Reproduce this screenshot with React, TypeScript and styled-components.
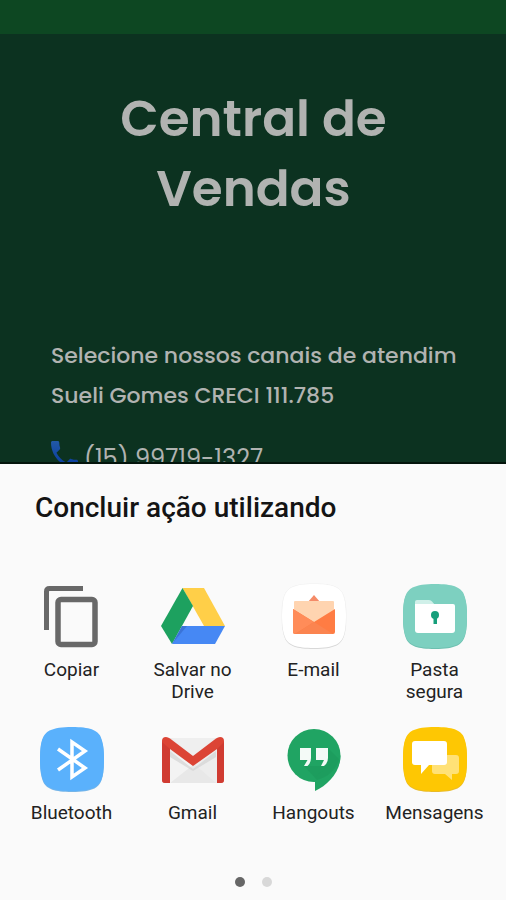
import React from "react";
import styled, { createGlobalStyle } from "styled-components";

const GlobalStyle = createGlobalStyle`
  *, *::before, *::after { box-sizing: border-box; }
  body { margin: 0; background: #0c3220; }
`;

const Screen = styled.div`
  display: flex;
  flex-direction: column;
  height: 100vh;
  overflow: hidden;
`;

const StatusBar = styled.div`
  flex: none;
  height: 34px;
  background: #0d4722;
`;

const Page = styled.main`
  flex: 1;
  min-height: 0;
  overflow: hidden;
  padding: 50px 50px 0 51px;
  background: #0c3220;
  color: #b1b3b1;
  font-family: Poppins, Inter, sans-serif;
`;

const Heading = styled.h1`
  max-width: 300px;
  margin: 0 auto 112px;
  font-size: 50px;
  font-weight: 600;
  line-height: 70px;
  text-align: center;
`;

const Line = styled.p`
  margin: 0;
  overflow: hidden;
  font-size: 22px;
  font-weight: 500;
  line-height: 40px;
  white-space: nowrap;
`;

const PhoneLink = styled.a`
  display: flex;
  align-items: flex-start;
  gap: 6px;
  margin-top: 25px;
  color: inherit;
  font-size: 24px;
  font-weight: 400;
  line-height: 36px;
  text-decoration: none;

  svg { flex: none; }
`;

const Sheet = styled.section`
  flex: none;
  padding: 24px 11px 12px;
  border-top: 2px solid #04150c;
  background: #fafafa;
  color: #141414;
  font-family: Roboto, sans-serif;
`;

const SheetTitle = styled.h2`
  margin: 0 24px 56px;
  font-size: 28px;
  font-weight: 500;
  line-height: 40px;
`;

const AppGrid = styled.div`
  display: grid;
  grid-template-columns: repeat(4, minmax(0, 1fr));
  row-gap: 24px;
`;

const AppButton = styled.button`
  display: flex;
  flex-direction: column;
  align-items: center;
  gap: 11px;
  padding: 0;
  border: 0;
  background: none;
  color: #222;
  font-family: inherit;
  font-size: 19px;
  line-height: 22px;
  cursor: pointer;

  svg { display: block; overflow: visible; }
`;

const Label = styled.span<{ $narrow?: boolean }>`
  max-width: ${(p) => (p.$narrow ? "84px" : "none")};
`;

const Pager = styled.div`
  display: flex;
  justify-content: center;
  gap: 17px;
  margin-top: 53px;
  padding-bottom: 1px;
`;

const Dot = styled.button<{ $active?: boolean }>`
  width: 10px;
  height: 10px;
  padding: 0;
  border: 0;
  border-radius: 50%;
  background: ${(p) => (p.$active ? "#666" : "#d8d8d8")};
`;

const Icon = ({ children }: { children: React.ReactNode }) => (
  <svg width="64" height="64" viewBox="0 0 64 64" aria-hidden="true">{children}</svg>
);

const SQUIRCLE =
  "M32 0C50 0 57 3 60.500 9.500C63 15 64 22 64 32C64 50 61 57 54.500 60.500C49 63 42 64 32 64C14 64 7 61 3.500 54.500C1 49 0 42 0 32C0 14 3 7 9.500 3.500C15 1 22 0 32 0Z";

const Tile = ({ fill, edge }: { fill: string; edge: string }) => (
  <>
    <path d={SQUIRCLE} fill={edge} transform="translate(0 1)" />
    <path d={SQUIRCLE} fill={fill} />
  </>
);

const CopyIcon = () => (
  <Icon>
    <path d="M6.500 46V7.500Q6.500 4.500 9.500 4.500H43" fill="none" stroke="#686868" strokeWidth="5" />
    <rect x="18" y="15.500" width="37" height="45" rx="3" fill="none" stroke="#686868" strokeWidth="5.500" />
  </Icon>
);

const DriveIcon = () => (
  <Icon>
    <path d="M21.500 4H43L64 42H43Z" fill="#ffcf48" />
    <path d="M21.500 4L32 22L11 60L0 42Z" fill="#1da15f" />
    <path d="M21 42H64L54 60H11Z" fill="#4688f4" />
    <path d="M21 42L26 42L11 60Z" fill="#3266c4" opacity=".6" />
  </Icon>
);

const EmailIcon = () => (
  <Icon>
    <path d={SQUIRCLE} fill="#f0f0f0" stroke="#f0f0f0" strokeWidth="1" />
    <Tile fill="#fff" edge="#d8d8d8" />
    <path d="M26 18L32 11L38 18Z" fill="#f58b68" />
    <rect x="12" y="17" width="40" height="25" rx="1" fill="#ffd4b0" />
    <path d="M11 25L32 38L53 25V48Q53 50 51 50H13Q11 50 11 48Z" fill="#ff7c43" />
    <path d="M11 25L32 38L13 50Q11 50 11 48Z" fill="#ff8c59" />
    <path d="M32 38L51 50H13Z" fill="#fb8450" />
  </Icon>
);

const FolderIcon = () => (
  <Icon>
    <Tile fill="#7dd0c0" edge="#6cbfaf" />
    <path d="M12 23V18Q12 16 14 16H26Q28 16 29 17.500L32 21H50V25H12Z" fill="#d0f0e9" />
    <path d="M12 20H50Q52 20 52 22V46Q52 49 49 49H15Q12 49 12 46Z" fill="#fff" />
    <circle cx="32" cy="31" r="4" fill="#169f7b" />
    <path d="M30.500 31H34V40H30.500Z" fill="#169f7b" />
  </Icon>
);

const BluetoothIcon = () => (
  <Icon>
    <Tile fill="#5ab1fc" edge="#75b5e8" />
    <path d="M18 22L45 41L32 50V15L45 24L18 43" fill="none" stroke="#fff" strokeWidth="3.500" strokeLinejoin="miter" />
  </Icon>
);

const GmailIcon = () => (
  <Icon>
    <path d="M5 11H59V56H5Z" fill="#ededed" />
    <path d="M9 56L32 36L55 56Z" fill="#e8e8e8" />
    <path d="M9 24L32 38L9 56Z" fill="#f3f3f3" />
    <path d="M10 11L32 29L54 11Z" fill="#efefef" />
    <path d="M9 24L32 42L55 24V30L32 44L9 30Z" fill="#cecece" opacity=".6" />
    <path d="M1 14Q1 10 5 10Q7 10 9 11.500L32 29L55 11.500Q57 10 59 10Q63 10 63 14V53Q63 56 60 56H56V22L32 39L9 22V56H4Q1 56 1 53Z" fill="#dc4435" />
    <path d="M1 15L9 22V56H4Q1 56 1 53ZM63 15L56 22V56H60Q63 56 63 53Z" fill="#c9382f" opacity=".65" />
  </Icon>
);

const HangoutsIcon = () => (
  <Icon>
    <circle cx="32" cy="28.500" r="26.500" fill="#20a463" />
    <path d="M58.500 28.500C58.500 45 46 58 33 64V50Z" fill="#20a463" />
    <path d="M22 39L35 53C46 50 55 42 57 32L46 21V31L42 39Z" fill="#188d53" opacity=".3" />
    <path d="M18 21H29V31Q29 36 25.500 39H22L25.500 33H18ZM34 21H46V31Q46 36 42 39H39L42 33H34Z" fill="#f4faf7" />
  </Icon>
);

const MessagesIcon = () => (
  <Icon>
    <Tile fill="#fec703" edge="#e9bb27" />
    <path d="M32 28H53Q56 28 56 31V44Q56 47 53 47H49V53L42 47H32Q29 47 29 44V31Q29 28 32 28Z" fill="#ffe176" />
    <path d="M12 14H41Q44 14 44 17V35Q44 38 41 38H26L18 47V38H12Q9 38 9 35V17Q9 14 12 14Z" fill="#fff" />
  </Icon>
);

const PhoneIcon = () => (
  <svg width="27" height="27" viewBox="3 3 18 18" aria-hidden="true">
    <linearGradient id="phone-fill" x1="0" y1="0" x2="0" y2="1">
      <stop offset="0" stopColor="#2259a5" />
      <stop offset="1" stopColor="#0639a0" />
    </linearGradient>
    <path
      fill="url(#phone-fill)"
      d="M6.620 10.790c1.440 2.830 3.760 5.140 6.590 6.590l2.200-2.200c.27-.27.67-.36 1.020-.24 1.120.37 2.330.57 3.570.57.550 0 1 .45 1 1V20c0 .55-.45 1-1 1C10.610 21 3 13.390 3 4c0-.55.45-1 1-1h3.500c.55 0 1 .45 1 1 0 1.250.2 2.450.57 3.570.11.35.03.74-.25 1.020z"
    />
  </svg>
);

const apps = [
  { label: "Copiar", icon: CopyIcon },
  { label: "Salvar no Drive", icon: DriveIcon, narrow: true },
  { label: "E-mail", icon: EmailIcon },
  { label: "Pasta segura", icon: FolderIcon, narrow: true },
  { label: "Bluetooth", icon: BluetoothIcon },
  { label: "Gmail", icon: GmailIcon },
  { label: "Hangouts", icon: HangoutsIcon },
  { label: "Mensagens", icon: MessagesIcon },
];

export default function App() {
  return (
    <Screen>
      <GlobalStyle />
      <StatusBar />
      <Page>
        <Heading>Central de Vendas</Heading>
        <Line>Selecione nossos canais de atendimento</Line>
        <Line>Sueli Gomes CRECI 111.785</Line>
        <PhoneLink href="tel:+5515997191327">
          <PhoneIcon />
          (15) 99719-1327
        </PhoneLink>
      </Page>
      <Sheet aria-labelledby="share-title">
        <SheetTitle id="share-title">Concluir ação utilizando</SheetTitle>
        <AppGrid>
          {apps.map(({ label, icon: AppIcon, narrow }) => (
            <AppButton key={label} type="button">
              <AppIcon />
              <Label $narrow={narrow}>{label}</Label>
            </AppButton>
          ))}
        </AppGrid>
        <Pager>
          <Dot type="button" $active aria-label="Página 1" />
          <Dot type="button" aria-label="Página 2" />
        </Pager>
      </Sheet>
    </Screen>
  );
}
